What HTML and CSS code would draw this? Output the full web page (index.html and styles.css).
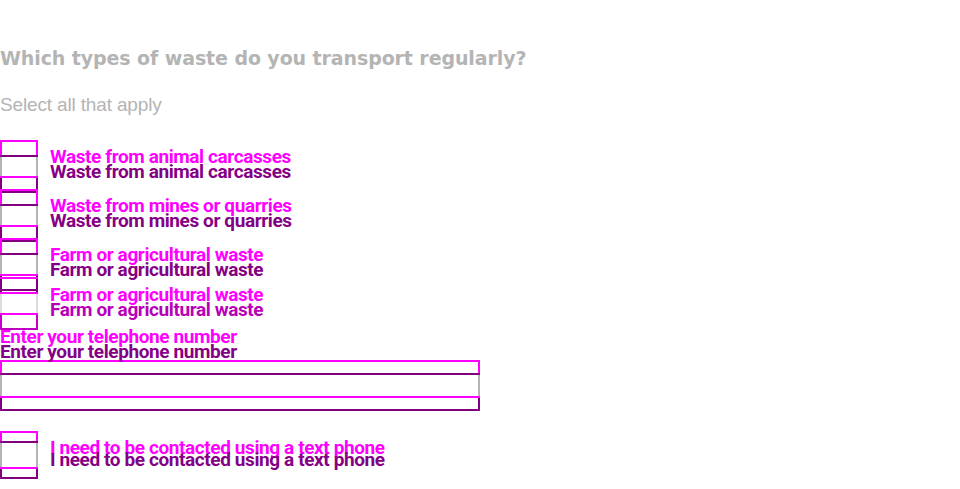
FILE: index.html
```html
<!DOCTYPE html>
<html lang="en">
<head>
<meta charset="utf-8">
<title>Which types of waste do you transport regularly?</title>
<link rel="stylesheet" href="styles.css">
</head>
<body>
<main class="page">
  <h1 class="heading">Which types of waste do you transport regularly?</h1>
  <p class="hint">Select all that apply</p>

  <div class="items">
    <div class="item">
      <span class="cb"></span>
      <div class="lbl"><div class="m">Waste from animal carcasses</div><div class="p">Waste from animal carcasses</div></div>
    </div>
    <div class="item">
      <span class="cb"></span>
      <div class="lbl"><div class="m">Waste from mines or quarries</div><div class="p">Waste from mines or quarries</div></div>
    </div>
    <div class="item short">
      <span class="cb"></span>
      <div class="lbl"><div class="m">Farm or agricultural waste</div><div class="p">Farm or agricultural waste</div></div>
    </div>
    <div class="item">
      <span class="cb cb-mixed"></span>
      <div class="lbl lbl-mixed"><div class="m">Farm or agricultural waste</div><div class="p">Farm or agricultural waste</div></div>
    </div>
  </div>

  <div class="phone">
    <div class="lbl lbl-phone"><div class="m">Enter your telephone number</div><div class="p">Enter your telephone number</div></div>
    <div class="field"></div>
  </div>

  <div class="item last">
    <span class="cb cb-last"></span>
    <div class="lbl lbl-last"><div class="m">I need to be contacted using a text phone</div><div class="p">I need to be contacted using a text phone</div></div>
  </div>
</main>
</body>
</html>
```

FILE: styles.css
```css
html, body {
  margin: 0;
  padding: 0;
  background: #ffffff;
}

.page {
  width: 960px;
  height: 489px;
  overflow: hidden;
  font-family: "Liberation Sans", Arial, sans-serif;
}

.heading {
  margin: 46px 0 0;
  font-family: "DejaVu Sans", sans-serif;
  font-weight: 700;
  font-size: 19px;
  line-height: 24px;
  letter-spacing: -0.1px;
  color: #b4b4b4;
  white-space: nowrap;
}

.hint {
  margin: 23px 0 0;
  font-family: "Liberation Sans", Arial, sans-serif;
  font-size: 19px;
  line-height: 24px;
  letter-spacing: -0.15px;
  color: #b4b4b4;
}

.items {
  margin-top: 23px;
}

.item {
  display: flex;
  gap: 12px;
  height: 49px;
}

.item.short {
  height: 39px;
}

/* diff-style checkbox: magenta = one render, purple = the other, grey = both */
.cb {
  --h: 38px;
  --d: 15px;
  --mt: #ff00ff;
  --pt: #800080;
  --mb: #ff00ff;
  --pb: #800080;
  --s1: #ff00ff;
  --s2: #b4b4b4;
  --s3: #800080;
  flex: none;
  display: block;
  width: 38px;
  height: calc(var(--h) + var(--d));
  background:
    linear-gradient(var(--mt), var(--mt)) 0 0 / 100% 2px no-repeat,
    linear-gradient(var(--pt), var(--pt)) 0 var(--d) / 100% 2px no-repeat,
    linear-gradient(var(--mb), var(--mb)) 0 calc(var(--h) - 2px) / 100% 2px no-repeat,
    linear-gradient(var(--pb), var(--pb)) 0 100% / 100% 2px no-repeat,
    linear-gradient(var(--s1) 0 var(--d), var(--s2) var(--d) var(--h), var(--s3) var(--h)) 0 0 / 2px 100% no-repeat,
    linear-gradient(var(--s1) 0 var(--d), var(--s2) var(--d) var(--h), var(--s3) var(--h)) 100% 0 / 2px 100% no-repeat;
}

.cb-mixed {
  --pt: #ff00ff;
  --pb: #c000c0;
  --s1: #800080;
  --s2: #dcdcdc;
  --s3: #c800c8;
}

.cb-last {
  --d: 10px;
}

.lbl {
  padding-top: 9px;
  font-family: Roboto, "Liberation Sans", sans-serif;
  font-weight: 700;
  font-size: 19px;
  line-height: 15px;
  letter-spacing: -0.4px;
  white-space: nowrap;
}

.lbl .m {
  color: #ff00ff;
}

.lbl .p {
  color: #850085;
}

.lbl-mixed {
  padding-top: 10px;
}

.lbl-mixed .p {
  color: #b800b8;
}

.phone {
  margin-top: 3px;
}

.lbl-phone {
  padding-top: 0;
  line-height: 15px;
}

.field {
  --h: 38px;
  --d: 13px;
  margin-top: 1px;
  width: 480px;
  height: calc(var(--h) + var(--d));
  background:
    linear-gradient(#ff00ff, #ff00ff) 0 0 / 100% 2px no-repeat,
    linear-gradient(#800080, #800080) 0 var(--d) / 100% 2px no-repeat,
    linear-gradient(#ff00ff, #ff00ff) 0 calc(var(--h) - 2px) / 100% 2px no-repeat,
    linear-gradient(#800080, #800080) 0 100% / 100% 2px no-repeat,
    linear-gradient(#ff00ff 0 var(--d), #b4b4b4 var(--d) var(--h), #800080 var(--h)) 0 0 / 2px 100% no-repeat,
    linear-gradient(#ff00ff 0 var(--d), #b4b4b4 var(--d) var(--h), #800080 var(--h)) 100% 0 / 2px 100% no-repeat;
}

.item.last {
  margin-top: 20px;
  height: 48px;
}

.lbl-last {
  padding-top: 11px;
  line-height: 12px;
}
```
